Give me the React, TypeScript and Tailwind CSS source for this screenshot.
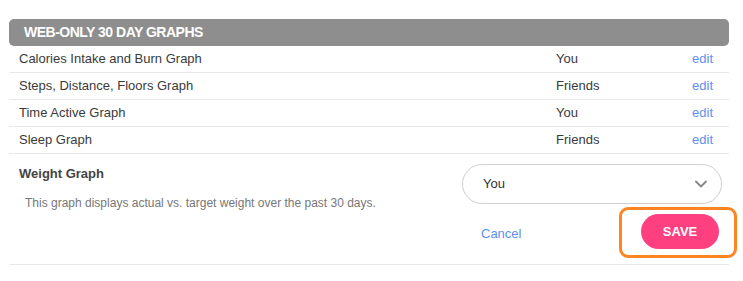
import { ChevronDown } from "lucide-react";

interface GraphRow {
  name: string;
  privacy: string;
}

const rows: GraphRow[] = [
  { name: "Calories Intake and Burn Graph", privacy: "You" },
  { name: "Steps, Distance, Floors Graph", privacy: "Friends" },
  { name: "Time Active Graph", privacy: "You" },
  { name: "Sleep Graph", privacy: "Friends" },
];

export default function App() {
  return (
    <div className="w-[743px] h-[281px] bg-white pt-[19px] font-['Liberation_Sans',Arial,sans-serif]">
      <div className="ml-[9px] w-[720px]">
        {/* header */}
        <div className="h-[27px] rounded-[5px] bg-[#8e8e8e] pl-[15px] flex items-center">
          <span className="text-[14px] font-bold text-white tracking-[-0.5px]">WEB-ONLY 30 DAY GRAPHS</span>
        </div>

        {/* graph rows */}
        {rows.map((r) => (
          <div key={r.name} className="h-[27px] border-b border-[#e8e8e8] flex items-center pl-[10px] pr-[16px] text-[13px]">
            <span className="flex-1 text-[#3a3a3a]">{r.name}</span>
            <span className="w-[136px] text-[#3a3a3a]">{r.privacy}</span>
            <a className="text-[#5f8ff0]">edit</a>
          </div>
        ))}

        {/* weight graph */}
        <div className="flex border-b border-[#e8e8e8] pt-[10px] pb-[15px]">
          <div className="flex-1 pl-[10px]">
            <p className="text-[13px] leading-[19px] font-bold text-[#444]">Weight Graph</p>
            <p className="mt-[11px] pl-[6px] text-[12px] text-[#777]">
              This graph displays actual vs. target weight over the past 30 days.
            </p>
          </div>
          <div className="w-[260px] mr-[7px]">
            <div className="h-[40px] rounded-full border border-[#d0d0d0] flex items-center pl-[20px] pr-[10px]">
              <span className="flex-1 text-[13px] text-[#333]">You</span>
              <ChevronDown className="h-5 w-5 text-[#8a8a8a]" strokeWidth={2.4} />
            </div>
            <div className="mt-[10px] flex items-center pl-[19px] pr-[3px]">
              <a className="flex-1 mt-[4px] text-[13px] text-[#5f8ff0]">Cancel</a>
              <div className="relative">
                <button className="h-[35px] w-[78px] rounded-full bg-[#fe3f80] text-[13px] font-bold text-white">
                  SAVE
                </button>
                <div className="absolute left-[-22px] top-[-7px] h-[51px] w-[118px] rounded-[9px] border-[3px] border-[#ff8524]" />
              </div>
            </div>
          </div>
        </div>
      </div>
    </div>
  );
}
